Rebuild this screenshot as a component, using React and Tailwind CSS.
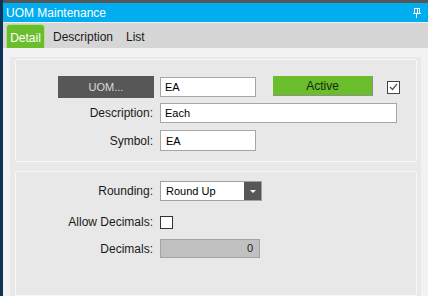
import React from 'react'

// Label column: right-aligned, ends just before the inputs
function Row({ label, children, className = '' }) {
  return (
    <div className={`flex items-center gap-[6px] ${className}`}>
      <div className="w-[138px] flex justify-end pr-[1px] text-[12px] text-[#1a1a1a]">{label}</div>
      {children}
    </div>
  )
}

function PinIcon() {
  return (
    <svg width="8" height="10" viewBox="0 0 8 10" fill="none">
      <rect x="1.5" y="0.5" width="5" height="5" stroke="white" strokeWidth="1" />
      <rect x="4" y="1" width="1" height="4" fill="white" />
      <rect x="0" y="5" width="8" height="1" fill="white" />
      <rect x="3" y="6" width="1" height="4" fill="white" />
    </svg>
  )
}

export default function App() {
  return (
    <div
      className="w-[428px] h-[296px] flex overflow-hidden"
      style={{ fontFamily: '"Liberation Sans", Arial, sans-serif' }}
    >
      {/* dark left edge */}
      <div className="w-[3px] bg-[#0b3553]" />

      <div className="flex-1 flex flex-col">
        <div className="h-[3px] bg-[#555555]" />

        {/* title bar */}
        <div className="h-[19px] bg-[#00aeef] flex items-center justify-between pl-[3px] pr-[7px]">
          <span className="text-[12px] text-white leading-none">UOM Maintenance</span>
          <PinIcon />
        </div>
        <div className="h-[1px] bg-[#f0f0f0]" />

        {/* tabs */}
        <div className="h-[25px] bg-[#d6d6d6] flex items-end pl-[3px]">
          <div className="h-[24px] w-[39px] bg-[#6abd2b] border border-b-0 border-[#b5dc90] rounded-t-[4px] flex items-center justify-center pt-[2px] text-[12px] text-white">
            Detail
          </div>
          <div className="h-[24px] flex items-center pt-[2px] ml-[8px] text-[12px] text-[#1a1a1a]">Description</div>
          <div className="h-[24px] flex items-center pt-[2px] ml-[13px] text-[12px] text-[#1a1a1a]">List</div>
        </div>

        {/* content */}
        <div className="flex-1 bg-[#f2f2f4] pl-[7px] pr-[7px] pt-[9px]">
          <div className="h-full bg-[#e9e9e9] pl-[5px] pr-[4px] pt-[2px] flex flex-col gap-[9px]">
            {/* panel 1 */}
            <div className="h-[103px] bg-[#e8e8e8] border border-[#f8f8f8] rounded-[2px] pt-[16px] flex flex-col">
              <div className="flex items-center gap-[6px]">
                <div className="w-[138px] flex justify-end">
                  <div className="w-[96px] h-[22px] bg-[#575757] flex items-center justify-center text-[11px] text-[#dcdcdc]">
                    UOM...
                  </div>
                </div>
                <div className="w-[96px] h-[20px] bg-white border border-[#a6a6a6] flex items-center pl-[4px] pt-[1px] text-[11px] text-black">
                  EA
                </div>
                <div className="ml-[11px] w-[100px] h-[20px] bg-[#6abd2b] border-r border-b border-[#8f8f8f] flex items-center justify-center text-[12px] text-[#16290f] -mt-[2px]">
                  Active
                </div>
                <div className="ml-[8px] w-[13px] h-[13px] bg-white border border-[#444] flex items-center justify-center">
                  <svg width="9" height="8" viewBox="0 0 9 8" fill="none">
                    <path d="M1 4 L3.5 6.5 L8 1" stroke="#555" strokeWidth="1.2" />
                  </svg>
                </div>
              </div>
              <Row label="Description:" className="mt-[5px]">
                <div className="w-[237px] h-[20px] bg-white border border-[#a6a6a6] flex items-center pl-[4px] pt-[1px] text-[11px] text-black">
                  Each
                </div>
              </Row>
              <Row label="Symbol:" className="mt-[7px]">
                <div className="w-[96px] h-[21px] bg-white border border-[#a6a6a6] flex items-center pl-[5px] pt-[2px] text-[11px] text-black">
                  EA
                </div>
              </Row>
            </div>

            {/* panel 2 */}
            <div className="flex-1 bg-[#e8e8e8] border border-[#f8f8f8] rounded-[2px] pt-[9px] flex flex-col">
              <Row label="Rounding:">
                <div className="w-[102px] h-[20px] bg-white border border-[#a0a0a0] flex items-center text-[11px] text-black">
                  <span className="flex-1 pl-[5px]">Round Up</span>
                  <div className="w-[17px] h-full bg-[#575757] flex items-center justify-center">
                    <svg width="6" height="3" viewBox="0 0 6 3">
                      <path d="M0 0 H6 L3 3 Z" fill="white" />
                    </svg>
                  </div>
                </div>
              </Row>
              <Row label="Allow Decimals:" className="mt-[12px]">
                <div className="w-[13px] h-[13px] bg-white border border-[#333]" />
              </Row>
              <Row label="Decimals:" className="mt-[8px]">
                <div className="w-[100px] h-[19px] bg-[#c0c0c0] border border-[#a3a3a3] flex items-center justify-end pr-[6px] text-[11px] text-[#222]">
                  0
                </div>
              </Row>
            </div>
          </div>
        </div>
      </div>
    </div>
  )
}
